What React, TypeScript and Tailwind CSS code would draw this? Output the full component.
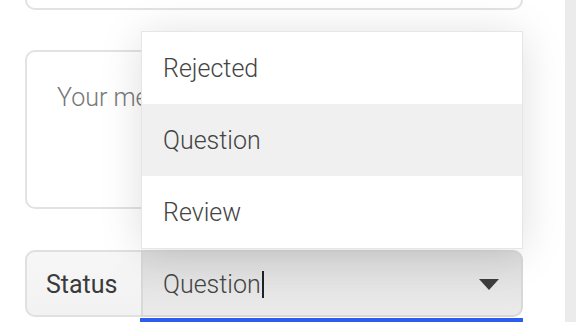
import React from "react";

export default function App() {
  return (
    <div className="flex w-[576px] h-[322px] overflow-hidden bg-white font-['Roboto',sans-serif]">
      <div className="relative flex-1 pl-[25px] pr-[42px]">
        <div className="h-[10px] border-2 border-t-0 border-[#e2e2e2] rounded-b-[10px]" />
        <div className="mt-[40px] h-[159px] border-2 border-[#e2e2e2] rounded-[10px] pt-[32px] pl-[30px] text-[25px] font-light leading-[28px] text-[#777] overflow-hidden whitespace-nowrap">
          Your message
        </div>
        <div className="mt-[41px] flex h-[67px]">
          <div className="w-[116px] flex items-center pl-[19px] pt-[2px] border-2 border-r-0 border-[#e0e0e0] rounded-l-[10px] bg-gradient-to-b from-[#f7f7f7] to-[#f2f2f2] text-[25px] font-normal text-[#3a3a3a]">
            Status
          </div>
          <div className="flex-1 flex items-center justify-between pl-[20px] pr-[22px] pt-[2px] border-2 border-[#d8d8d8] rounded-r-[10px] bg-gradient-to-b from-[#dcdcdc] to-[#ebebeb] text-[25px] font-light text-[#444]">
            <span className="flex items-center">
              Question
              <span className="inline-block w-[2px] h-[27px] bg-[#222] ml-[1px]" />
            </span>
            <svg width="20" height="11" viewBox="0 0 20 11">
              <polygon points="0,0 20,0 10,11" fill="#3d3d3d" />
            </svg>
          </div>
        </div>
        <div className="mt-[1px] ml-[115px] h-[4px] bg-[#2d5cf0]" />
        <div className="absolute left-[141px] top-[31px] w-[382px] bg-white border border-[#e6e6e6] shadow-[0_4px_40px_rgba(0,0,0,0.13)] text-[25px] font-light text-[#444]">
          <div className="h-[72px] flex items-center pl-[21px] pt-[2px]">Rejected</div>
          <div className="h-[72px] flex items-center pl-[21px] pt-[2px] bg-[#f0f0f0]">Question</div>
          <div className="h-[72px] flex items-center pl-[21px] pt-[2px]">Review</div>
        </div>
      </div>
      <div className="w-[11px] bg-[#ebebeb]" />
    </div>
  );
}
